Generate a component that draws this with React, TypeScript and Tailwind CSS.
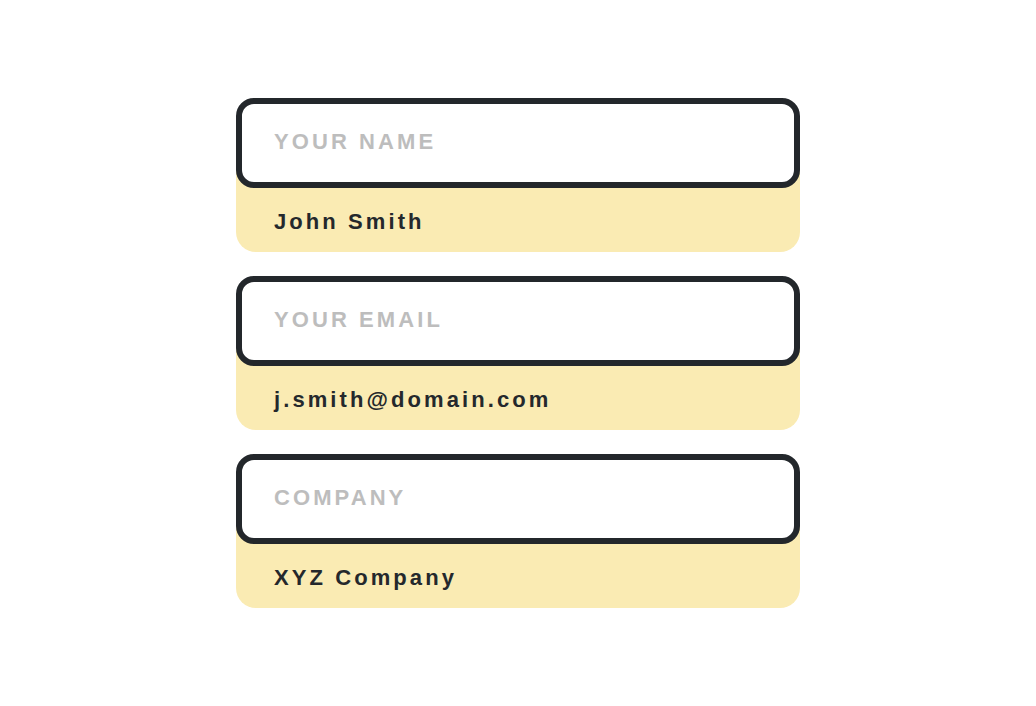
const fields = [
  { label: "YOUR NAME", value: "John Smith" },
  { label: "YOUR EMAIL", value: "j.smith@domain.com" },
  { label: "COMPANY", value: "XYZ Company" },
];

function Field({ label, value }: { label: string; value: string }) {
  return (
    <div className="flex flex-col">
      <div className="relative z-10 h-[90px] rounded-[18px] border-[6px] border-[#23272b] bg-white flex items-center px-[32px] pb-[3px]">
        <span className="text-[22px] font-bold tracking-[0.14em] text-[#bdbdbd]">{label}</span>
      </div>
      <div className="-mt-[30px] pt-[33px] h-[94px] rounded-b-[20px] bg-[#faebb3] flex items-center px-[38px]">
        <span className="text-[22px] font-bold tracking-[0.14em] text-[#24282c]">{value}</span>
      </div>
    </div>
  );
}

export default function App() {
  return (
    <div
      className="w-[1036px] h-[706px] bg-white flex items-center justify-center"
      style={{ fontFamily: '"Liberation Sans", Arial, sans-serif' }}
    >
      <div className="w-[564px] flex flex-col gap-[24px]">
        {fields.map((f) => (
          <Field key={f.label} label={f.label} value={f.value} />
        ))}
      </div>
    </div>
  );
}
